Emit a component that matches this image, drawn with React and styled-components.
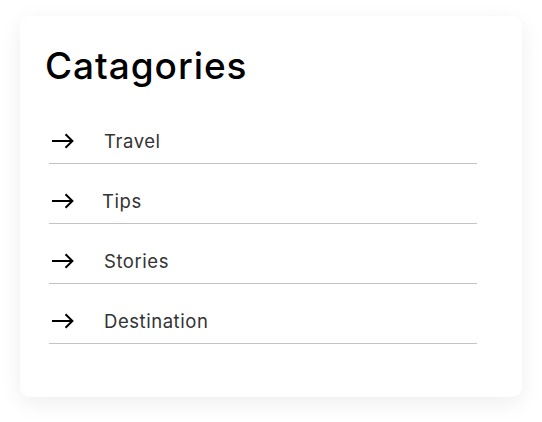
import styled, { createGlobalStyle } from "styled-components";

const GlobalStyle = createGlobalStyle`
  * { box-sizing: border-box; }
  body {
    margin: 0;
    background: #fff;
    font-family: "Inter", "Open Sans", sans-serif;
  }
`;

const Page = styled.div`
  padding: 16px 20px 25px 20px;
`;

const Card = styled.div`
  background: #fff;
  border-radius: 10px;
  box-shadow: 0 6px 22px rgba(0, 0, 0, 0.07);
  padding: 28px 25px 54px 25px;
  height: 381px;
`;

const Title = styled.h2`
  margin: 0;
  font-size: 37px;
  font-weight: 500;
  line-height: 44px;
  color: #000;
  letter-spacing: 0.95px;
`;

const List = styled.ul`
  list-style: none;
  margin: 16px 0 0 4px;
  padding: 0;
  width: 428px;
`;

const Item = styled.li`
  display: flex;
  align-items: center;
  padding: 26px 0 11px 3px;
  border-bottom: 1px solid #c4c4c4;
`;

const Label = styled.a`
  margin-left: ${(p) => p.$offset}px;
  font-size: 18.5px;
  line-height: 22px;
  color: #333;
  letter-spacing: 0.55px;
  text-decoration: none;
`;

const Arrow = () => (
  <svg width="22" height="16" viewBox="0 0 22 16" fill="none">
    <path d="M0 8 H20" stroke="#000" strokeWidth="2" />
    <path d="M13.5 1.2 L20.4 8 L13.5 14.8" stroke="#000" strokeWidth="2" />
  </svg>
);

const items = [
  { name: "Travel", offset: 30 },
  { name: "Tips", offset: 28 },
  { name: "Stories", offset: 30 },
  { name: "Destination", offset: 30 },
];

export default function App() {
  return (
    <Page>
      <GlobalStyle />
      <Card>
        <Title>Catagories</Title>
        <List>
          {items.map((it) => (
            <Item key={it.name}>
              <Arrow />
              <Label href="#" $offset={it.offset}>
                {it.name}
              </Label>
            </Item>
          ))}
        </List>
      </Card>
    </Page>
  );
}
